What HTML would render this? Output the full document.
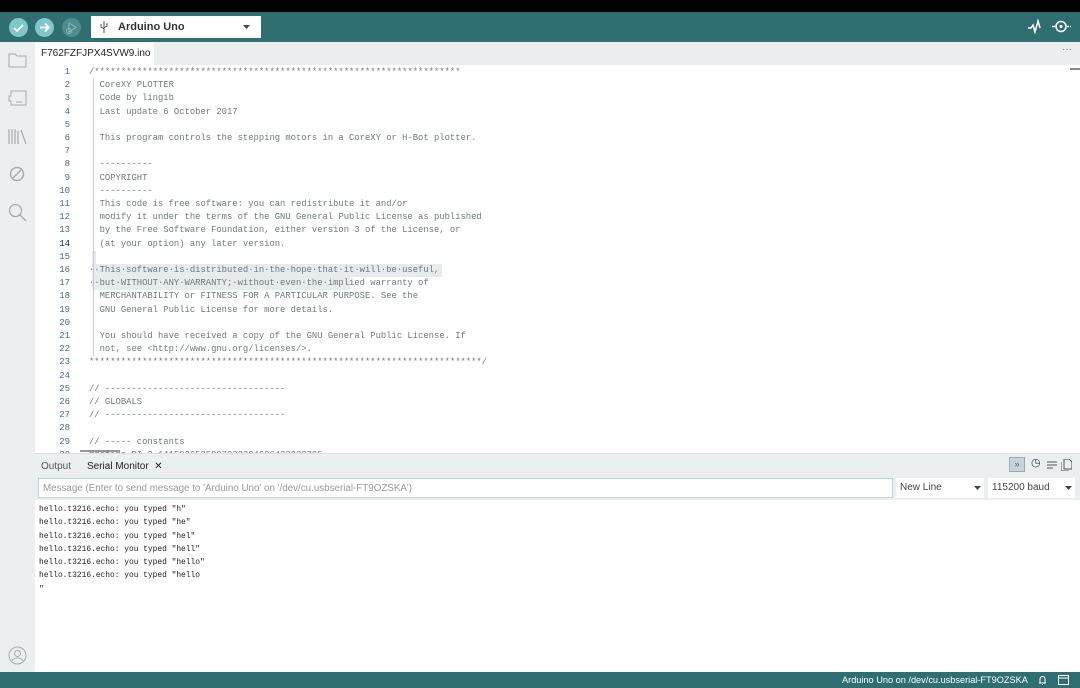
<!DOCTYPE html>
<html><head><meta charset="utf-8"><style>
*{margin:0;padding:0;box-sizing:border-box}
body{width:1080px;height:688px;overflow:hidden;background:#fff;font-family:"Liberation Sans",sans-serif;position:relative}
.abs{position:absolute}
#top{left:0;top:0;width:1080px;height:12px;background:#000}
#tb{left:0;top:12px;width:1080px;height:30px;background:#2f6f71}
.btn{position:absolute;top:6px;width:19px;height:19px;border-radius:50%;background:#7fc7c9}
#side{left:0;top:42px;width:35px;height:630px;background:#eceff0}
#tabs{left:35px;top:42px;width:1045px;height:23px;background:#ebeeef}
#tab{left:35px;top:42px;width:119px;height:23px;background:#fff;font-size:10px;color:#222;padding:6px 0 0 6px}
#code{left:35px;top:65px;width:1035px;height:388px;background:#fff;overflow:hidden;font-family:"Liberation Mono",monospace;font-size:8.85px;color:#6f7979}
.ln{position:absolute;left:0;width:35px;text-align:right;color:#3d6c86;font-size:9px}
.tx{position:absolute;left:54px;white-space:pre}
#guide{left:93px;top:78px;width:1px;height:278px;background:#ccc}
#out{font-family:"Liberation Mono",monospace;font-size:7.9px;color:#222;white-space:pre;left:39px;}
#status{left:0;top:672px;width:1080px;height:16px;background:#2f6f71;color:#fff;font-size:9.2px}
</style></head><body>
<div class="abs" id="top"></div>
<div class="abs" id="tb">
 <div class="btn" style="left:9px"><svg width="19" height="19"><path d="M5 10l3 3 6-6" stroke="#fff" stroke-width="1.8" fill="none"/></svg></div>
 <div class="btn" style="left:35px"><svg width="19" height="19"><path d="M5 9.5h9M10 5.5l4 4-4 4" stroke="#fff" stroke-width="1.8" fill="none"/></svg></div>
 <div class="btn" style="left:62px;background:#4f8c8e"><svg width="19" height="19"><path d="M7 5l7 4.5-7 4.5z" stroke="#8bb" fill="none"/><circle cx="7" cy="13" r="2.5" stroke="#8bb" fill="none"/></svg></div>
 <div class="abs" style="left:91px;top:4px;width:170px;height:22px;background:#fff;font-weight:bold;font-size:11px;color:#333;padding:5px 0 0 27px">Arduino Uno
  <svg class="abs" style="left:9px;top:5px" width="8" height="12"><path d="M4 0v12M1 3v3l3 2M7 2v3l-3 2" stroke="#555" fill="none"/></svg>
  <svg class="abs" style="left:152px;top:9px" width="7" height="5"><path d="M0 0h7l-3.5 4z" fill="#444"/></svg></div>
 <svg class="abs" style="left:1027px;top:7px" width="15" height="15"><path d="M1 9h3l2-3 2 7 3-11 2 7" stroke="#fff" stroke-width="1.5" fill="none"/></svg>
 <svg class="abs" style="left:1052px;top:7px" width="20" height="15"><circle cx="9" cy="7.5" r="5" stroke="#fff" stroke-width="1.5" fill="none"/><circle cx="9" cy="7.5" r="1.5" fill="#fff"/><path d="M0 7.5h3M15 7.5h2M18 7.5h1" stroke="#fff" stroke-width="1.5"/></svg>
</div>
<div class="abs" id="side">
 <svg class="abs" style="left:8px;top:10px" width="19" height="16"><path d="M1 2h6l2 2h9v11H1z" stroke="#aaa" fill="none"/></svg>
 <svg class="abs" style="left:8px;top:48px" width="19" height="16"><path d="M3 1h15v14H3v-4H1V6h2z M8 12h6" stroke="#aaa" fill="none"/></svg>
 <svg class="abs" style="left:8px;top:86px" width="19" height="17"><path d="M1 1v15M4 1v15M7 1v15M10 3v13M13 2l5 14" stroke="#aaa" stroke-width="1.2" fill="none"/></svg>
 <svg class="abs" style="left:9px;top:124px" width="17" height="17"><circle cx="8" cy="8" r="6.5" stroke="#aaa" stroke-width="1.5" fill="none"/><path d="M4 12l8-8" stroke="#aaa" stroke-width="1.5"/></svg>
 <svg class="abs" style="left:8px;top:161px" width="19" height="19"><circle cx="7.5" cy="7.5" r="6" stroke="#aaa" stroke-width="1.3" fill="none"/><path d="M12 12l6 6" stroke="#aaa" stroke-width="1.3"/></svg>
 <svg class="abs" style="left:8px;top:604px" width="19" height="19"><circle cx="9.5" cy="9.5" r="8.5" stroke="#aaa" fill="none"/><circle cx="9.5" cy="7.5" r="3" stroke="#aaa" fill="none"/><path d="M4 15c2-4 9-4 11 0" stroke="#aaa" fill="none"/></svg>
</div>
<div class="abs" id="tabs"><span class="abs" style="right:8px;top:2px;color:#777;font-size:10px">···</span></div>
<div class="abs" id="tab">F762FZFJPX4SVW9.ino</div>
<div class="abs" style="left:1070px;top:68px;width:10px;height:2px;background:#888"></div>
<div class="abs" id="code">
<div class="abs" style="left:57px;top:199px;width:350px;height:13px;background:#e8ebee"></div>
<div class="abs" style="left:57px;top:212px;width:258px;height:13px;background:#e8ebee"></div>
<div class="abs" style="left:57px;top:186px;width:4px;height:13px;background:#e8ebee"></div>
<div class="abs" style="left:45px;top:385px;width:40px;height:2px;background:#999"></div>
</div>
<div class="abs" id="guide"></div>
<div class="abs" style="left:35px;top:453px;width:1045px;height:47px;background:#eceff0;border-top:1px solid #ddd">
 <span class="abs" style="left:6px;top:7px;font-size:10px;color:#555">Output</span>
 <span class="abs" style="left:52px;top:7px;font-size:10px;color:#222">Serial Monitor &nbsp;✕</span>
 <div class="abs" style="left:974px;top:3px;width:16px;height:15px;background:#c8d3dc;border:1px solid #9ab;color:#567;font-size:9px;text-align:center;line-height:12px">»</div>
 <span class="abs" style="left:996px;top:2px;font-size:11px;color:#333">◷</span>
 <svg class="abs" style="left:1012px;top:7px" width="11" height="9"><path d="M0 1h10M0 4h10M0 7h6" stroke="#555"/></svg>
 <svg class="abs" style="left:1026px;top:5px" width="11" height="12"><path d="M3 0h5l3 3v7H3zM0 3v9h8" stroke="#555" fill="none"/></svg>
</div>
<div class="abs" style="left:38px;top:478px;width:855px;height:20px;background:#fff;border:1px solid #b9d3d8;font-size:9.8px;color:#999;padding:4px 0 0 4px">Message (Enter to send message to 'Arduino Uno' on '/dev/cu.usbserial-FT9OZSKA')</div>
<div class="abs" style="left:896px;top:478px;width:88px;height:20px;background:#fff;font-size:10px;color:#444;padding:4px 0 0 4px">New Line<svg class="abs" style="left:78px;top:8px" width="7" height="5"><path d="M0 0h7l-3.5 4z" fill="#444"/></svg></div>
<div class="abs" style="left:988px;top:478px;width:87px;height:20px;background:#fff;font-size:10px;color:#444;padding:4px 0 0 4px">115200 baud<svg class="abs" style="left:77px;top:8px" width="7" height="5"><path d="M0 0h7l-3.5 4z" fill="#444"/></svg></div>
<div class="abs" id="out" style="top:503px;line-height:13.3px">hello.t3216.echo: you typed "h"
hello.t3216.echo: you typed "he"
hello.t3216.echo: you typed "hel"
hello.t3216.echo: you typed "hell"
hello.t3216.echo: you typed "hello"
hello.t3216.echo: you typed "hello
"</div>
<div class="abs" id="status"><span class="abs" style="left:842px;top:3px">Arduino Uno on /dev/cu.usbserial-FT9OZSKA</span>
<svg class="abs" style="left:1038px;top:3px" width="9" height="10"><path d="M1 8h7M2 8V4a2.5 2.5 0 015 0v4M4 9.5h1" stroke="#fff" fill="none"/></svg>
<svg class="abs" style="left:1058px;top:3px" width="11" height="10"><path d="M.5.5h10v9H.5zM.5 3h10" stroke="#fff" fill="none"/></svg></div>
<script>
var L=["/*********************************************************************",
"  CoreXY PLOTTER","  Code by lingib","  Last update 6 October 2017","",
"  This program controls the stepping motors in a CoreXY or H-Bot plotter.","",
"  ----------","  COPYRIGHT","  ----------",
"  This code is free software: you can redistribute it and/or",
"  modify it under the terms of the GNU General Public License as published",
"  by the Free Software Foundation, either version 3 of the License, or",
"  (at your option) any later version.","",
"··This·software·is·distributed·in·the·hope·that·it·will·be·useful,",
"··but·WITHOUT·ANY·WARRANTY;·without·even·the·implied warranty of",
"  MERCHANTABILITY or FITNESS FOR A PARTICULAR PURPOSE. See the",
"  GNU General Public License for more details.","",
"  You should have received a copy of the GNU General Public License. If",
"  not, see <http://www.gnu.org/licenses/>.",
"**************************************************************************/","",
"// ----------------------------------","// GLOBALS","// ----------------------------------","",
"// ----- constants","#define PI 3.1415926535897932384626433832795"];
var c=document.getElementById('code'),h='';
for(var i=0;i<L.length;i++){var t=(72+i*13.2-65-5);
h+='<div class="ln" style="top:'+t+'px;'+(i==13?'color:#123':'')+'">'+(i+1)+'</div><div class="tx" style="top:'+t+'px">'+L[i].replace(/</g,'&lt;')+'</div>';}
c.insertAdjacentHTML('beforeend',h);
</script>
</body></html>
